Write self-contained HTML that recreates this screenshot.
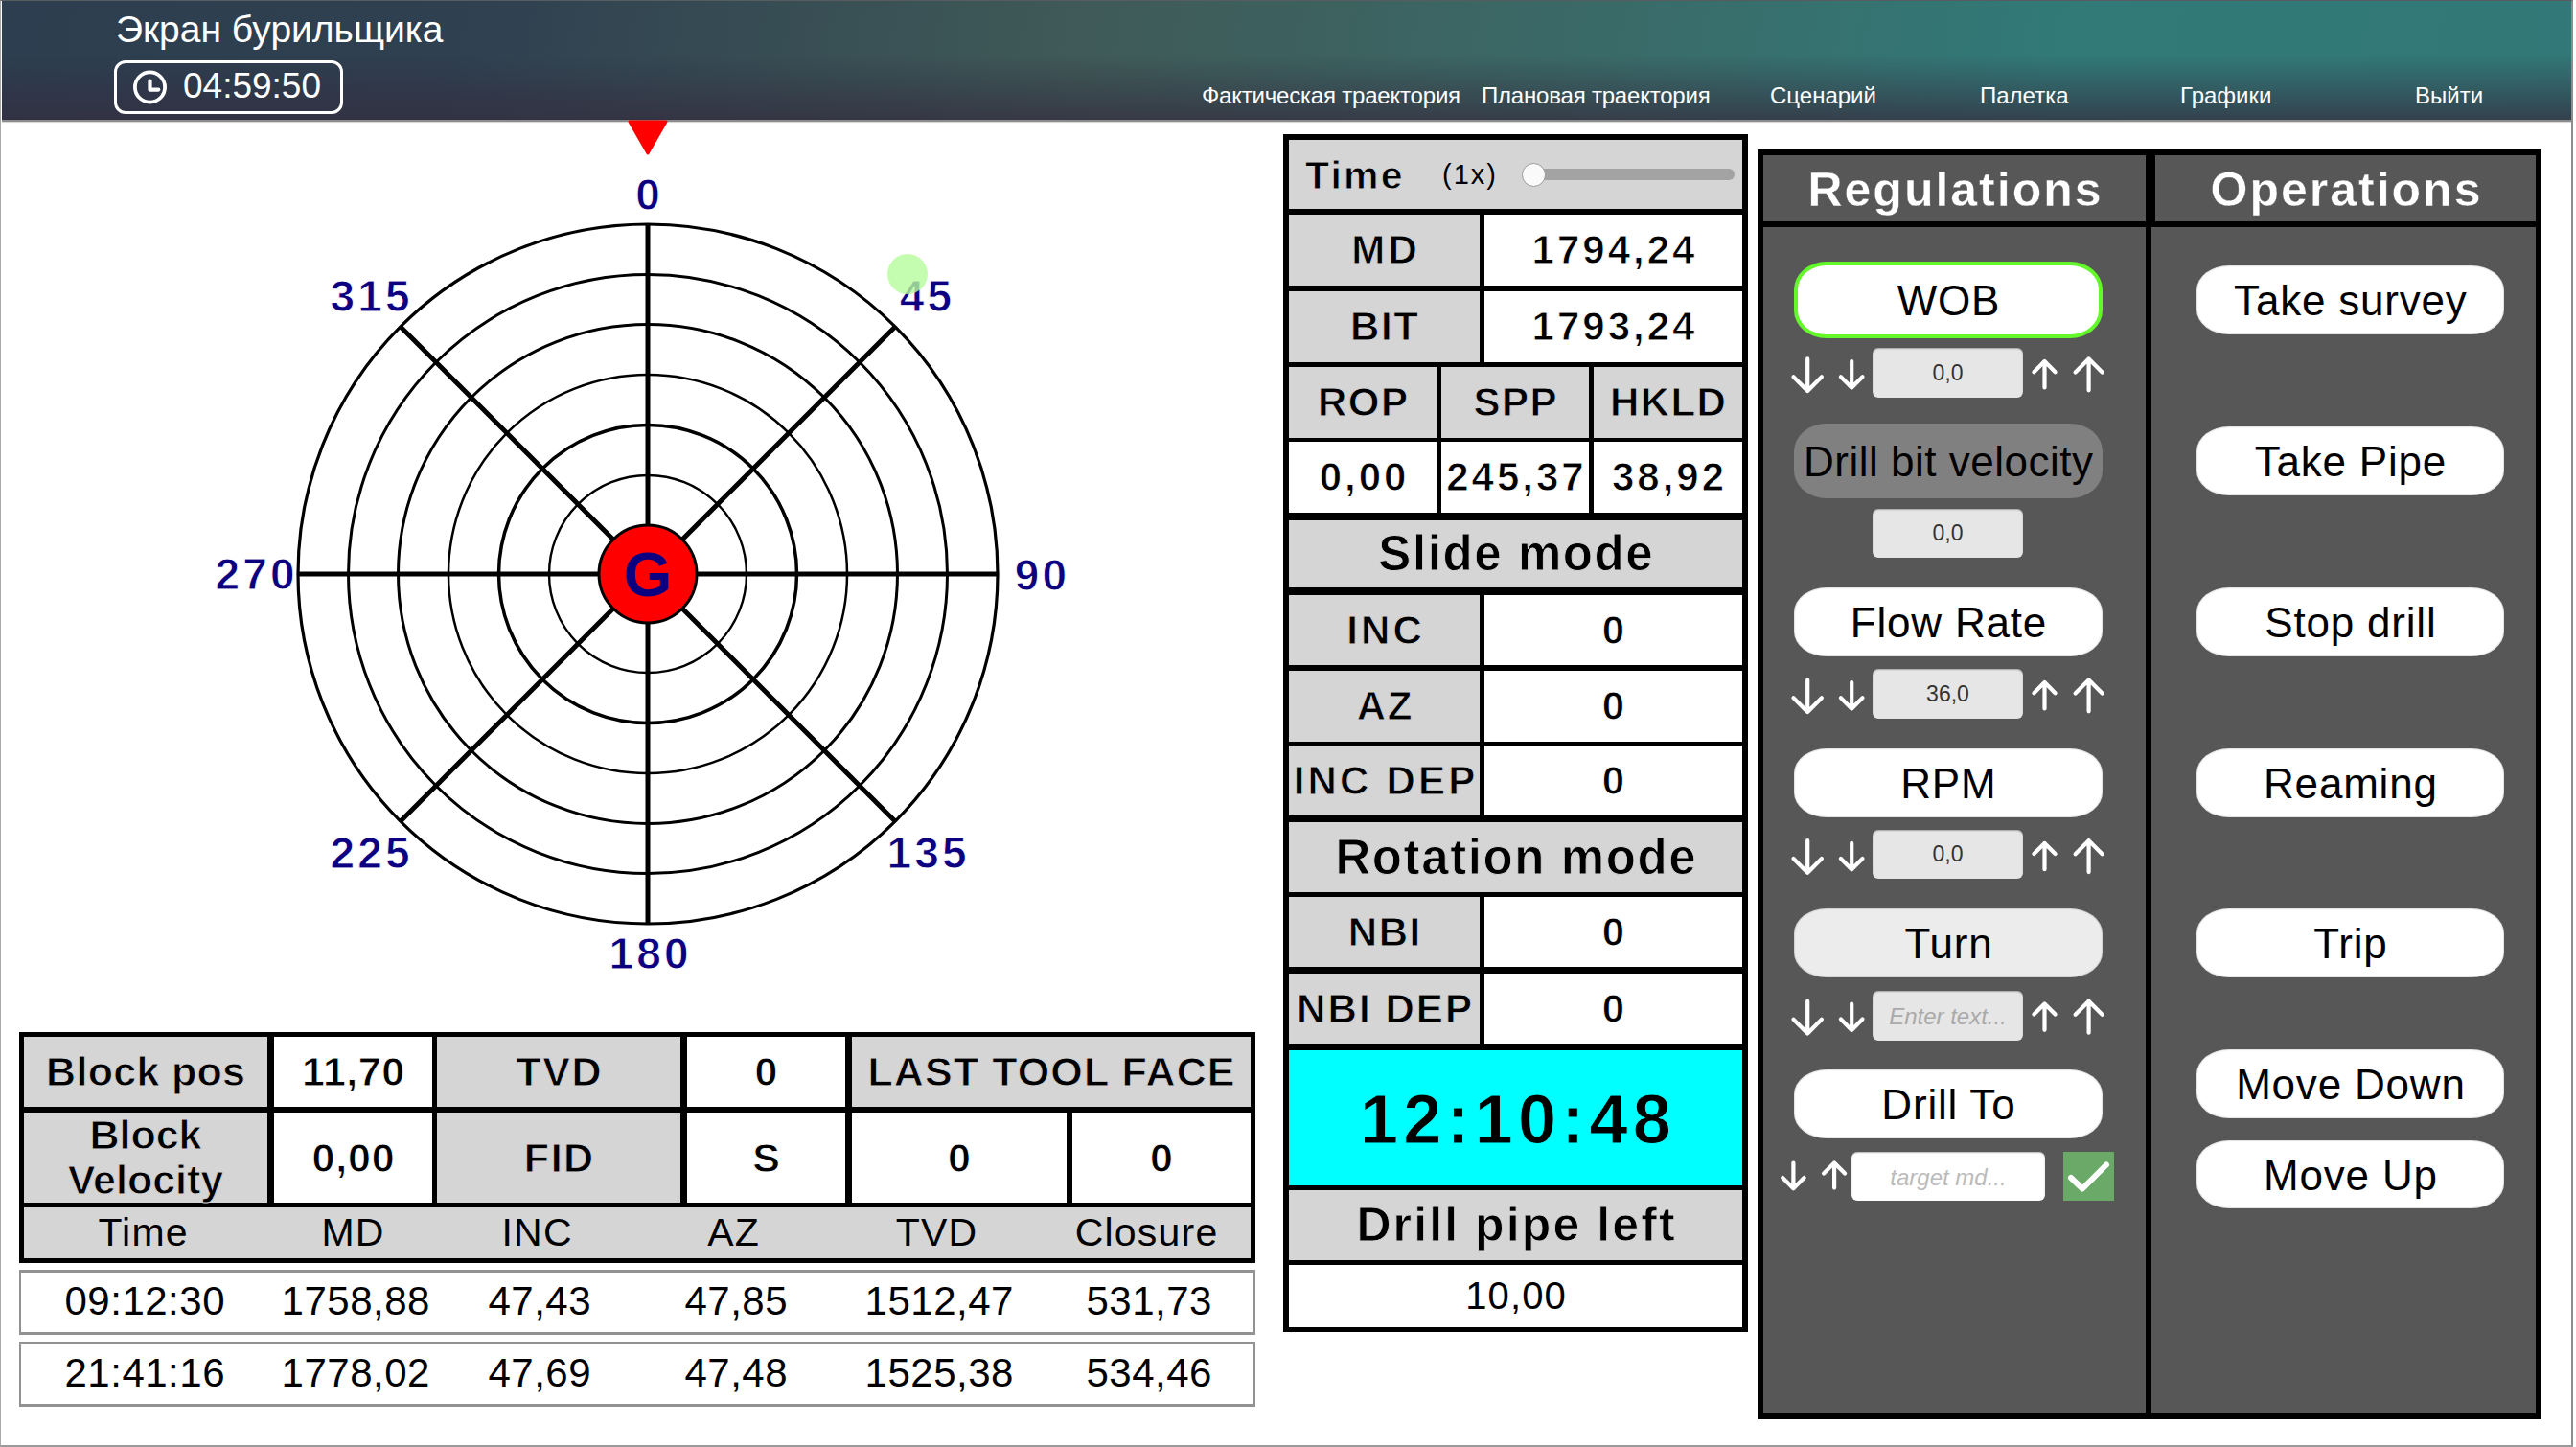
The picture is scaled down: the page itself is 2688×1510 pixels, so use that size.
<!DOCTYPE html>
<html><head><meta charset="utf-8">
<style>
*{box-sizing:border-box;margin:0;padding:0}
html,body{width:2688px;height:1510px;overflow:hidden;background:#fff;font-family:"Liberation Sans",sans-serif}
.a{position:absolute}
#frame{left:0;top:0;width:2685px;height:1510px;border-top:1px solid #575c61;border-left:1.5px solid #a9a9a9;border-right:2px solid #8e8e8e;border-bottom:2px solid #9a9a9a}
#hdr{left:1.5px;top:1px;width:2681.5px;height:124px;
background:
 linear-gradient(to bottom, rgba(40,35,55,0) 45%, rgba(50,44,62,0.35) 72%, rgba(52,44,62,0.72) 100%),
 linear-gradient(100deg,#2d3e50 0%,#2f4050 18%,#3f5a58 42%,#3a6a68 62%,#317a78 80%,#327878 100%);}
#hline{left:1.5px;top:125px;width:2681.5px;height:2px;background:#8c8c8c;box-shadow:0 0.5px 1px rgba(0,0,0,0.3)}
.w{color:#fff}
.nav{top:84.5px;height:30px;line-height:30px;font-size:24px;color:#fff;white-space:nowrap}
.c{text-align:center;white-space:nowrap}
.b{font-weight:bold}
.bk{background:#000}
.gr{background:#d5d5d5}
.wh{background:#fff}
.lbl{color:#0d0080;font-weight:bold;font-size:46px;width:200px;height:50px;line-height:50px;text-align:center;letter-spacing:3.2px;padding-left:3.2px}
.btn{background:#fff;border-radius:34px/26px;color:#000;font-size:44px;letter-spacing:0.8px;padding-top:1px;padding-left:0.8px;text-align:center;white-space:nowrap;box-shadow:inset 0 0 1px 1px rgba(0,0,0,0.12)}
.inp{background:#e6e6e6;border-radius:6px;color:#333;font-size:23px;text-align:center;box-shadow:inset 0 1px 1.5px rgba(0,0,0,0.3)}
.t41{font-size:42px;letter-spacing:3.2px;padding-left:3.2px}
.t43{font-size:43px;letter-spacing:1.5px;padding-left:1.5px}
.t41n{font-size:41px;letter-spacing:1.2px;padding-left:1.2px}
.t42n{font-size:42px;letter-spacing:0.5px;padding-left:0.5px}
.ls{letter-spacing:3.0px;padding-left:3.0px}
.row{left:20px;width:1290px;height:68px;border:3px solid #929292;border-left-width:2px;background:#fff}
.dg{background:#575757}
.hd{color:#fff;font-size:50px;letter-spacing:2px;padding-left:2px}
.gr.b{-webkit-text-stroke:0.9px #d5d5d5}
.wh.b{-webkit-text-stroke:0.9px #fff}
.lbl{-webkit-text-stroke:0.9px #fff}
.hd{-webkit-text-stroke:0.4px #575757}
</style></head><body>
<div id="frame" class="a"></div>
<div id="hdr" class="a"></div>
<div id="hline" class="a"></div>
<div class="a w" style="left:121px;top:11px;font-size:39px;line-height:40px;white-space:nowrap">Экран бурильщика</div>
<div class="a" style="left:119px;top:63px;width:239px;height:56px;border:3.5px solid #fff;border-radius:12px"></div>
<svg class="a" style="left:136px;top:71px" width="42" height="42" viewBox="0 0 42 42"><circle cx="20.5" cy="20" r="15.6" fill="none" stroke="#fff" stroke-width="3.8"/><path d="M20.5 13.5 V22.6 H29.3" fill="none" stroke="#fff" stroke-width="4.2" stroke-linecap="round" stroke-linejoin="round"/></svg>
<div class="a w" style="left:191px;top:70px;font-size:37px;line-height:40px;white-space:nowrap">04:59:50</div>
<div class="a nav" style="left:1254px;letter-spacing:-0.2px">Фактическая траектория</div>
<div class="a nav" style="left:1546px;letter-spacing:-0.2px">Плановая траектория</div>
<div class="a nav" style="left:1847px">Сценарий</div>
<div class="a nav" style="left:2066px">Палетка</div>
<div class="a nav" style="left:2275px">Графики</div>
<div class="a nav" style="left:2520px">Выйти</div>

<!-- COMPASS -->
<svg class="a" style="left:0;top:0" width="1330" height="1070" viewBox="0 0 1330 1070">
 <defs><filter id="bl" x="-10%" y="-10%" width="120%" height="120%"><feGaussianBlur stdDeviation="0.65"/></filter><filter id="bl2" x="-10%" y="-10%" width="120%" height="120%"><feGaussianBlur stdDeviation="0.45"/></filter></defs>
 <path d="M657 127 L695 127 L676 160 Z" fill="#f00" stroke="#f00" stroke-width="3" stroke-linejoin="round"/>
 <g fill="none" stroke="#000">
  <circle cx="676" cy="599" r="365" stroke-width="3.2" filter="url(#bl)"/>
  <circle cx="676" cy="599" r="312.5" stroke-width="3" filter="url(#bl)"/>
  <circle cx="676" cy="599" r="260.5" stroke-width="3" filter="url(#bl)"/>
  <circle cx="676" cy="599" r="208" stroke-width="2.5" filter="url(#bl2)"/>
  <circle cx="676" cy="599" r="155.5" stroke-width="3.5"/>
  <circle cx="676" cy="599" r="103" stroke-width="2.4"/>
 </g>
 <g stroke="#000" stroke-width="5">
  <line x1="676" y1="234" x2="676" y2="965"/>
  <line x1="311" y1="599" x2="1041" y2="599"/>
  <line x1="418" y1="341" x2="934" y2="857"/>
  <line x1="934" y1="341" x2="418" y2="857"/>
 </g>
 <circle cx="676" cy="599" r="51" fill="#f00" stroke="#000" stroke-width="3"/>
 <text x="676" y="621.5" font-family="Liberation Sans" font-weight="bold" font-size="65" fill="#0d0080" text-anchor="middle">G</text>
</svg>
<div class="a lbl" style="left:576px;top:178px">0</div>
<div class="a lbl" style="left:866px;top:284px">45</div>
<div class="a lbl" style="left:986px;top:575px">90</div>
<div class="a lbl" style="left:867px;top:865px">135</div>
<div class="a lbl" style="left:577px;top:970px">180</div>
<div class="a lbl" style="left:286px;top:865px">225</div>
<div class="a lbl" style="left:166px;top:574px">270</div>
<div class="a lbl" style="left:286px;top:284px">315</div>
<div class="a" style="left:926px;top:265px;width:42px;height:42px;border-radius:50%;background:rgba(182,252,156,0.8)"></div>

<!-- MIDDLE PANEL -->
<div class="a bk" style="left:1339px;top:140px;width:485px;height:1250px"></div>
<div class="a gr" style="left:1345px;top:146px;width:473px;height:72px"></div>
<div class="a b" style="-webkit-text-stroke:0.9px #d5d5d5;left:1362px;top:158px;font-size:41px;line-height:50px;letter-spacing:2.2px">Time</div>
<div class="a" style="left:1505px;top:164px;font-size:29px;line-height:36px;letter-spacing:2px">(1x)</div>
<div class="a" style="left:1594px;top:176px;width:216px;height:12px;border-radius:6px;background:#a3a3a3"></div>
<div class="a" style="left:1588px;top:170px;width:25px;height:25px;border-radius:50%;background:#fafafa;border:1px solid #9a9a9a"></div>

<div class="a gr c b t41" style="left:1345px;top:224px;width:199px;height:74px;line-height:74px">MD</div>
<div class="a wh c b t41 ls" style="left:1549px;top:224px;width:269px;height:74px;line-height:74px">1794,24</div>
<div class="a gr c b t41" style="left:1345px;top:304px;width:199px;height:74px;line-height:74px;letter-spacing:1.6px;padding-left:1.6px">BIT</div>
<div class="a wh c b t41 ls" style="left:1549px;top:304px;width:269px;height:74px;line-height:74px">1793,24</div>

<div class="a gr c b t41" style="left:1345px;top:383px;width:154px;height:74px;line-height:74px;letter-spacing:1.6px;padding-left:1.6px">ROP</div>
<div class="a gr c b t41" style="left:1504px;top:383px;width:154px;height:74px;line-height:74px;letter-spacing:1.6px;padding-left:1.6px">SPP</div>
<div class="a gr c b t41" style="left:1663px;top:383px;width:155px;height:74px;line-height:74px;letter-spacing:1.4px;padding-left:1.4px">HKLD</div>
<div class="a wh c b t41 ls" style="left:1345px;top:461px;width:154px;height:74px;line-height:74px">0,00</div>
<div class="a wh c b t41 ls" style="left:1504px;top:461px;width:154px;height:74px;line-height:74px">245,37</div>
<div class="a wh c b t41 ls" style="left:1663px;top:461px;width:155px;height:74px;line-height:74px">38,92</div>

<div class="a gr c b" style="left:1345px;top:543px;width:473px;height:70px;line-height:70px;font-size:51px;letter-spacing:1.6px;padding-left:1.6px">Slide mode</div>
<div class="a gr c b t41" style="left:1345px;top:621px;width:199px;height:73px;line-height:73px">INC</div>
<div class="a wh c b t41" style="left:1549px;top:621px;width:269px;height:73px;line-height:73px">0</div>
<div class="a gr c b t41" style="left:1345px;top:700px;width:199px;height:74px;line-height:74px;letter-spacing:1.6px;padding-left:1.6px">AZ</div>
<div class="a wh c b t41" style="left:1549px;top:700px;width:269px;height:74px;line-height:74px">0</div>
<div class="a gr c b t41" style="left:1345px;top:778px;width:199px;height:73px;line-height:73px">INC DEP</div>
<div class="a wh c b t41" style="left:1549px;top:778px;width:269px;height:73px;line-height:73px">0</div>
<div class="a gr c b" style="left:1345px;top:858px;width:473px;height:73px;line-height:73px;font-size:51px;letter-spacing:1.6px;padding-left:1.6px">Rotation mode</div>
<div class="a gr c b t41" style="left:1345px;top:936px;width:199px;height:73px;line-height:73px;letter-spacing:1.6px;padding-left:1.6px">NBI</div>
<div class="a wh c b t41" style="left:1549px;top:936px;width:269px;height:73px;line-height:73px">0</div>
<div class="a gr c b t41" style="left:1345px;top:1016px;width:199px;height:73px;line-height:73px;letter-spacing:2.1px;padding-left:2.1px">NBI DEP</div>
<div class="a wh c b t41" style="left:1549px;top:1016px;width:269px;height:73px;line-height:73px">0</div>
<div class="a c b" style="left:1345px;top:1096px;width:473px;height:141px;line-height:145px;background:#00ffff;-webkit-text-stroke:1px #00ffff;font-size:72px;letter-spacing:5.2px;padding-left:5px">12:10:48</div>
<div class="a gr c b" style="left:1345px;top:1242px;width:473px;height:73px;line-height:73px;font-size:50px;letter-spacing:2.1px;padding-left:2.1px">Drill pipe left</div>
<div class="a wh c" style="left:1345px;top:1320px;width:473px;height:65px;line-height:65px;font-size:40px;letter-spacing:1.1px;padding-left:1.1px">10,00</div>

<!-- BOTTOM LEFT TABLE -->
<div class="a bk" style="left:20px;top:1077px;width:1290px;height:241px"></div>
<div class="a gr c b t43" style="left:25px;top:1082px;width:254px;height:73px;line-height:73px;letter-spacing:0.3px;padding-left:0.3px">Block pos</div>
<div class="a wh c b t43" style="left:286px;top:1082px;width:165px;height:73px;line-height:73px;letter-spacing:0.5px;padding-left:0.5px">11,70</div>
<div class="a gr c b t43" style="left:456px;top:1082px;width:254px;height:73px;line-height:73px">TVD</div>
<div class="a wh c b t43" style="left:717px;top:1082px;width:165px;height:73px;line-height:73px">0</div>
<div class="a gr c b t43" style="left:889px;top:1082px;width:416px;height:73px;line-height:73px;letter-spacing:1.1px;padding-left:1.1px">LAST TOOL FACE</div>
<div class="a gr c b t43" style="left:25px;top:1161px;width:254px;height:94px;line-height:47px;white-space:normal;letter-spacing:0;padding-left:0">Block<br>Velocity</div>
<div class="a wh c b t43" style="left:286px;top:1161px;width:165px;height:94px;line-height:94px;letter-spacing:0.8px;padding-left:0.8px">0,00</div>
<div class="a gr c b t43" style="left:456px;top:1161px;width:254px;height:94px;line-height:94px">FID</div>
<div class="a wh c b t43" style="left:717px;top:1161px;width:165px;height:94px;line-height:94px">S</div>
<div class="a wh c b t43" style="left:889px;top:1161px;width:224px;height:94px;line-height:94px">0</div>
<div class="a wh c b t43" style="left:1119px;top:1161px;width:186px;height:94px;line-height:94px">0</div>
<div class="a gr" style="left:25px;top:1260px;width:1280px;height:53px"></div>
<div class="a c t41n" style="left:49px;top:1260px;width:200px;line-height:53px">Time</div>
<div class="a c t41n" style="left:268px;top:1260px;width:200px;line-height:53px">MD</div>
<div class="a c t41n" style="left:460px;top:1260px;width:200px;line-height:53px">INC</div>
<div class="a c t41n" style="left:665px;top:1260px;width:200px;line-height:53px">AZ</div>
<div class="a c t41n" style="left:877px;top:1260px;width:200px;line-height:53px">TVD</div>
<div class="a c t41n" style="left:1096px;top:1260px;width:200px;line-height:53px">Closure</div>

<div class="a row" style="top:1325px"></div>
<div class="a row" style="top:1400px"></div>
<div class="a c t42n" style="left:51px;top:1325px;width:200px;line-height:66px">09:12:30</div>
<div class="a c t42n" style="left:271px;top:1325px;width:200px;line-height:66px">1758,88</div>
<div class="a c t42n" style="left:463px;top:1325px;width:200px;line-height:66px">47,43</div>
<div class="a c t42n" style="left:668px;top:1325px;width:200px;line-height:66px">47,85</div>
<div class="a c t42n" style="left:880px;top:1325px;width:200px;line-height:66px">1512,47</div>
<div class="a c t42n" style="left:1099px;top:1325px;width:200px;line-height:66px">531,73</div>
<div class="a c t42n" style="left:51px;top:1400px;width:200px;line-height:66px">21:41:16</div>
<div class="a c t42n" style="left:271px;top:1400px;width:200px;line-height:66px">1778,02</div>
<div class="a c t42n" style="left:463px;top:1400px;width:200px;line-height:66px">47,69</div>
<div class="a c t42n" style="left:668px;top:1400px;width:200px;line-height:66px">47,48</div>
<div class="a c t42n" style="left:880px;top:1400px;width:200px;line-height:66px">1525,38</div>
<div class="a c t42n" style="left:1099px;top:1400px;width:200px;line-height:66px">534,46</div>

<!-- REGULATIONS / OPERATIONS -->
<div class="a bk" style="left:1834px;top:156px;width:818px;height:1325px"></div>
<div class="a dg c b hd" style="left:1840px;top:162px;width:399px;height:69px;line-height:72px">Regulations</div>
<div class="a dg c b hd" style="left:2249px;top:162px;width:397px;height:69px;line-height:72px">Operations</div>
<div class="a dg" style="left:1840px;top:237px;width:399px;height:1238px"></div>
<div class="a dg" style="left:2245px;top:237px;width:401px;height:1238px"></div>

<div class="a btn" style="left:1872px;top:273px;width:322px;height:80px;line-height:72px;border:4.5px solid #62f82a;box-shadow:none;border-radius:34px/29px">WOB</div>
<div class="a inp" style="left:1954px;top:363px;width:157px;height:52px;line-height:52px">0,0</div>
<div class="a btn" style="left:1872px;top:442px;width:322px;height:78px;line-height:78px;background:#808080;box-shadow:none;border-radius:34px/29px;letter-spacing:0.5px;padding-left:0.5px">Drill bit velocity</div>
<div class="a inp" style="left:1954px;top:531px;width:157px;height:51px;line-height:51px">0,0</div>
<div class="a btn" style="left:1872px;top:613px;width:322px;height:72px;line-height:72px">Flow Rate</div>
<div class="a inp" style="left:1954px;top:698px;width:157px;height:52px;line-height:52px">36,0</div>
<div class="a btn" style="left:1872px;top:781px;width:322px;height:72px;line-height:72px">RPM</div>
<div class="a inp" style="left:1954px;top:866px;width:157px;height:51px;line-height:51px">0,0</div>
<div class="a btn" style="left:1872px;top:948px;width:322px;height:72px;line-height:72px;background:#ececec">Turn</div>
<div class="a inp" style="left:1954px;top:1034px;width:157px;height:52px;line-height:54px;font-style:italic;color:#aaa;font-size:24px">Enter text...</div>
<div class="a btn" style="left:1872px;top:1116px;width:322px;height:72px;line-height:72px">Drill To</div>
<div class="a inp" style="left:1932px;top:1202px;width:202px;height:51px;line-height:53px;background:#fff;font-style:italic;color:#bbb;font-size:24px">target md...</div>
<div class="a" style="left:2153px;top:1202px;width:53px;height:51px;background:#6aa968"></div>
<svg class="a" style="left:0;top:0" width="2688" height="1510" viewBox="0 0 2688 1510">
<g fill="none" stroke="#fff" stroke-width="4.2" stroke-linecap="round" stroke-linejoin="round"><path d="M1886.2 374.4 V408.0 M1871.5 393.3 L1886.2 408.0 L1900.9 393.3"/><path d="M1932.2 377.1 V404.5 M1920.9 393.2 L1932.2 404.5 L1943.5 393.2"/><path d="M2133.5 404.4 V377.1 M2122.4 388.2 L2133.5 377.1 L2144.6 388.2"/><path d="M2179.6 407.3 V374.4 M2165.6 388.4 L2179.6 374.4 L2193.6 388.4"/><path d="M1886.2 709.4 V743.0 M1871.5 728.3 L1886.2 743.0 L1900.9 728.3"/><path d="M1932.2 712.1 V739.5 M1920.9 728.2 L1932.2 739.5 L1943.5 728.2"/><path d="M2133.5 739.4 V712.1 M2122.4 723.2 L2133.5 712.1 L2144.6 723.2"/><path d="M2179.6 742.3 V709.4 M2165.6 723.4 L2179.6 709.4 L2193.6 723.4"/><path d="M1886.2 877.2 V910.8 M1871.5 896.1 L1886.2 910.8 L1900.9 896.1"/><path d="M1932.2 879.9 V907.3 M1920.9 896.0 L1932.2 907.3 L1943.5 896.0"/><path d="M2133.5 907.2 V879.9 M2122.4 891.0 L2133.5 879.9 L2144.6 891.0"/><path d="M2179.6 910.1 V877.2 M2165.6 891.2 L2179.6 877.2 L2193.6 891.2"/><path d="M1886.2 1044.8 V1078.4 M1871.5 1063.7 L1886.2 1078.4 L1900.9 1063.7"/><path d="M1932.2 1047.5 V1074.9 M1920.9 1063.6 L1932.2 1074.9 L1943.5 1063.6"/><path d="M2133.5 1074.8 V1047.5 M2122.4 1058.6 L2133.5 1047.5 L2144.6 1058.6"/><path d="M2179.6 1077.7 V1044.8 M2165.6 1058.8 L2179.6 1044.8 L2193.6 1058.8"/><path d="M1871.4 1213.5 V1240.3 M1860.2 1229.1 L1871.4 1240.3 L1882.6 1229.1"/><path d="M1914.1 1239.6 V1213.5 M1903.1 1224.5 L1914.1 1213.5 L1925.1 1224.5"/></g>
<path d="M2161 1229 L2173 1240.5 L2198 1215.5" fill="none" stroke="#fff" stroke-width="6" stroke-linecap="round" stroke-linejoin="round"/>
</svg>

<div class="a btn" style="left:2292px;top:277px;width:321px;height:72px;line-height:72px">Take survey</div>
<div class="a btn" style="left:2292px;top:445px;width:321px;height:72px;line-height:72px">Take Pipe</div>
<div class="a btn" style="left:2292px;top:613px;width:321px;height:72px;line-height:72px">Stop drill</div>
<div class="a btn" style="left:2292px;top:781px;width:321px;height:72px;line-height:72px">Reaming</div>
<div class="a btn" style="left:2292px;top:948px;width:321px;height:72px;line-height:72px">Trip</div>
<div class="a btn" style="left:2292px;top:1095px;width:321px;height:72px;line-height:72px">Move Down</div>
<div class="a btn" style="left:2292px;top:1190px;width:321px;height:71px;line-height:71px">Move Up</div>
</body></html>
